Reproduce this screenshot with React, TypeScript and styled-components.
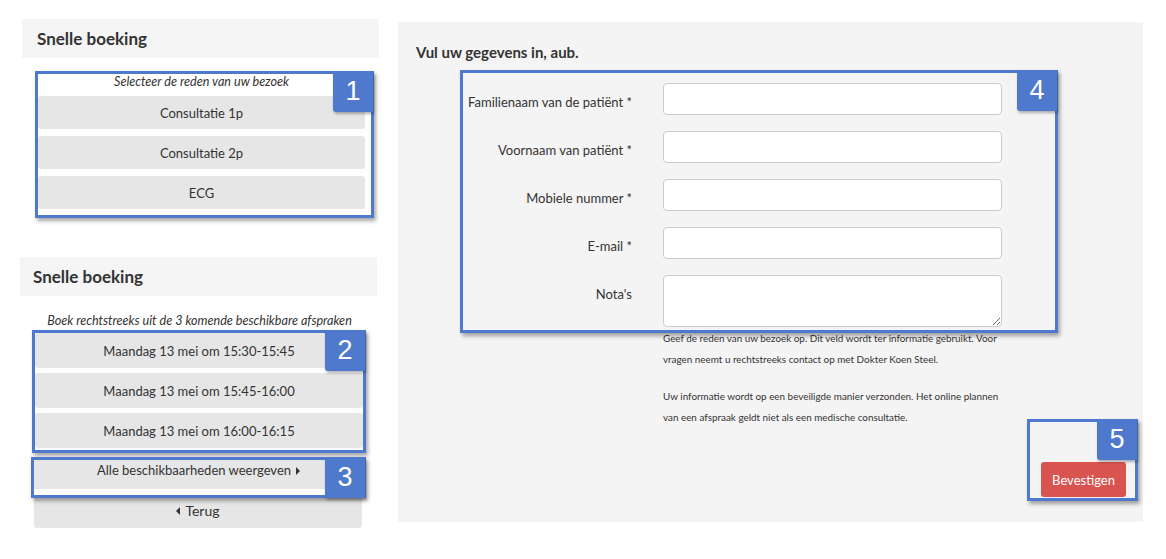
import { FC, Fragment, ReactNode } from 'react'
import styled, { createGlobalStyle } from 'styled-components'

const GlobalStyle = createGlobalStyle`
    body {
        margin: 0;
        background: #ffffff;
        font-family: Lato, "Open Sans", sans-serif;
        color: #333333;
    }
    * { box-sizing: border-box; }
`

const Page = styled.div`
    display: flex;
    align-items: flex-start;
    gap: 19px;
    padding: 19px 0 0 20px;
`

const LeftColumn = styled.div`
    display: flex;
    flex-direction: column;
    width: 359px;
`

const SectionHeader = styled.div<{ $shift: number; $indent: number; $gapTop?: number }>`
    width: 357px;
    height: 39px;
    margin-left: ${p => p.$shift}px;
    margin-top: ${p => p.$gapTop ?? 0}px;
    padding-left: ${p => p.$indent}px;
    padding-bottom: 1px;
    display: flex;
    align-items: center;
    background: #f5f5f5;
    font-size: 17px;
    font-weight: 700;
    color: #333;
`

const Frame = styled.div<{ $left: number; $width: number; $top?: number; $pad?: string; $white?: boolean }>`
    position: relative;
    margin-left: ${p => p.$left}px;
    margin-top: ${p => p.$top ?? 0}px;
    width: ${p => p.$width}px;
    padding: ${p => p.$pad ?? '0'};
    border: 3px solid #4e79cd;
    background: ${p => (p.$white ? '#ffffff' : 'transparent')};
    box-shadow: 2px 3px 4px rgba(0, 0, 0, 0.35);
    display: flex;
    flex-direction: column;
`

const Badge = styled.div`
    position: absolute;
    top: -3px;
    right: -2px;
    width: 40px;
    height: 41px;
    background: #4e79cd;
    color: #fff;
    font-family: "Liberation Sans", Arial, sans-serif;
    font-size: 27px;
    display: flex;
    align-items: center;
    justify-content: center;
    border-bottom-left-radius: 3px;
    box-shadow: 1px 2px 3px rgba(0, 0, 0, 0.3);
    z-index: 2;
`

const Hint = styled.div<{ $height: number; $padTop?: number }>`
    height: ${p => p.$height}px;
    padding-top: ${p => p.$padTop ?? 0}px;
    line-height: 16px;
    text-align: center;
    font-size: 12.6px;
    font-style: italic;
    color: #333;
`

const ButtonStack = styled.div<{ $gap: number }>`
    display: flex;
    flex-direction: column;
    gap: ${p => p.$gap}px;
`

const SlotButton = styled.div<{ $height: number }>`
    height: ${p => p.$height}px;
    display: flex;
    align-items: center;
    justify-content: center;
    gap: 5px;
    background: #e6e6e6;
    border-radius: 3px;
    font-size: 13px;
    color: #333;
`

const AllButton = styled(SlotButton)`
    align-items: flex-start;
    padding-top: 2px;
    border-radius: 0;
`

const BackButton = styled.div`
    margin-left: 14px;
    width: 328px;
    height: 30px;
    padding-bottom: 5px;
    display: flex;
    align-items: center;
    justify-content: center;
    gap: 5px;
    background: #e6e6e6;
    border-radius: 0 0 3px 3px;
    font-size: 14px;
    color: #333;
`

const Caret = styled.span<{ $dir: 'left' | 'right'; $lift?: number }>`
    display: inline-block;
    width: 0;
    height: 0;
    margin-top: ${p => p.$lift ?? 0}px;
    border-top: 4px solid transparent;
    border-bottom: 4px solid transparent;
    ${p => (p.$dir === 'right' ? 'border-left: 4px solid #333;' : 'border-right: 4px solid #333;')}
`

const Panel = styled.div`
    margin-top: 3px;
    width: 745px;
    height: 500px;
    background: #f4f4f4;
    display: flex;
    flex-direction: column;
    padding: 20px 0 21px 0;
`

const PanelTitle = styled.div`
    padding-left: 18px;
    line-height: 20px;
    font-size: 15px;
    font-weight: 700;
    color: #333;
`

const FormGrid = styled.div`
    display: grid;
    grid-template-columns: 169px 339px;
    column-gap: 31px;
    row-gap: 16px;
    padding: 10px 0 3px 0;
`

const Label = styled.label`
    text-align: right;
    padding-top: 9px;
    line-height: 20px;
    font-size: 13px;
    color: #333;
`

const Input = styled.input`
    height: 32px;
    width: 339px;
    border: 1px solid #cccccc;
    border-radius: 4px;
    background: #fff;
    font-family: inherit;
`

const TextArea = styled.textarea`
    height: 52px;
    width: 339px;
    border: 1px solid #cccccc;
    border-radius: 4px;
    background: #fff;
    font-family: inherit;
    resize: vertical;
`

const BottomRow = styled.div`
    flex: 1;
    display: flex;
    justify-content: space-between;
    align-items: flex-end;
    margin-top: -5px;
    padding-right: 5px;
`

const HelpText = styled.div`
    align-self: flex-start;
    margin-left: 265px;
    font-size: 9.9px;
    line-height: 21px;
    color: #333;
    white-space: nowrap;
`

const HelpPara = styled.p`
    margin: 0 0 16px 0;
`

const ConfirmButton = styled.button`
    width: 85px;
    height: 35px;
    border: none;
    border-radius: 3px;
    background: #d9534f;
    color: #fff;
    font-family: inherit;
    font-size: 13px;
`

const fields = [
  'Familienaam van de patiënt *',
  'Voornaam van patiënt *',
  'Mobiele nummer *',
  'E-mail *',
]

const slots = ['15:30-15:45', '15:45-16:00', '16:00-16:15']

type FrameProps = { $left: number; $width: number; $top?: number; $pad?: string; $white?: boolean }

const Annotated: FC<{ n: number; children: ReactNode } & FrameProps> = ({ n, children, ...rest }) => (
  <Frame {...rest}>
    {children}
    <Badge>{n}</Badge>
  </Frame>
)

const App: FC = () => {
  return (
    <>
      <GlobalStyle />
      <Page>
        <LeftColumn>
          <SectionHeader $shift={2} $indent={15}>Snelle boeking</SectionHeader>
          <Annotated n={1} $left={15} $width={339} $top={13} $pad="0 6px 6px 0" $white>
            <Hint $height={22}>Selecteer de reden van uw bezoek</Hint>
            <ButtonStack $gap={7}>
              <SlotButton $height={33}>Consultatie 1p</SlotButton>
              <SlotButton $height={33}>Consultatie 2p</SlotButton>
              <SlotButton $height={33}>ECG</SlotButton>
            </ButtonStack>
          </Annotated>

          <SectionHeader $shift={0} $indent={13} $gapTop={39}>Snelle boeking</SectionHeader>
          <Hint $height={34} $padTop={17}>Boek rechtstreeks uit de 3 komende beschikbare afspraken</Hint>
          <Annotated n={2} $left={12} $width={334} $pad="0 0 2px 0" $white>
            <ButtonStack $gap={5}>
              {slots.map(s => (
                <SlotButton key={s} $height={35}>Maandag 13 mei om {s}</SlotButton>
              ))}
            </ButtonStack>
          </Annotated>
          <Annotated n={3} $left={11} $width={335} $top={4} $pad="0 0 6px 0" $white>
            <AllButton $height={29}>
              Alle beschikbaarheden weergeven <Caret $dir="right" $lift={5} />
            </AllButton>
          </Annotated>
          <BackButton>
            <Caret $dir="left" /> Terug
          </BackButton>
        </LeftColumn>

        <Panel>
          <PanelTitle>Vul uw gegevens in, aub.</PanelTitle>
          <Annotated n={4} $left={62} $width={598} $top={8}>
            <FormGrid>
              {fields.map(f => (
                <Fragment key={f}>
                  <Label>{f}</Label>
                  <Input />
                </Fragment>
              ))}
              <Label>Nota's</Label>
              <TextArea />
            </FormGrid>
          </Annotated>
          <BottomRow>
            <HelpText>
              <HelpPara>
                Geef de reden van uw bezoek op. Dit veld wordt ter informatie gebruikt. Voor
                <br />
                vragen neemt u rechtstreeks contact op met Dokter Koen Steel.
              </HelpPara>
              <HelpPara>
                Uw informatie wordt op een beveiligde manier verzonden. Het online plannen
                <br />
                van een afspraak geldt niet als een medische consultatie.
              </HelpPara>
            </HelpText>
            <Annotated n={5} $left={0} $width={111} $pad="40px 9px 1px 11px">
              <ConfirmButton>Bevestigen</ConfirmButton>
            </Annotated>
          </BottomRow>
        </Panel>
      </Page>
    </>
  )
}

export default App
